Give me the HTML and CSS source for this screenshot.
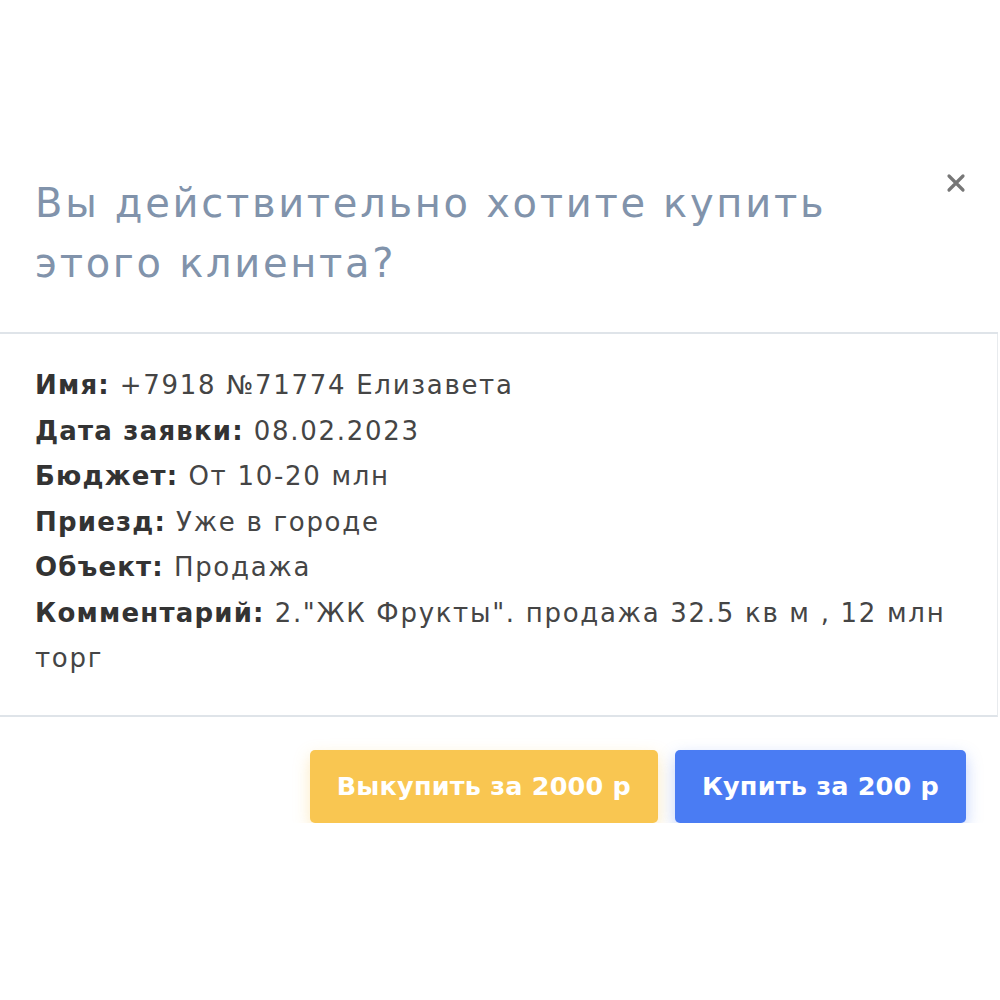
FILE: index.html
```html
<!DOCTYPE html>
<html lang="ru">
<head>
<meta charset="utf-8">
<title>Покупка клиента</title>
<link rel="stylesheet" href="styles.css">
</head>
<body>
<div class="page">
  <div class="modal">
    <div class="modal-header">
      <h2 class="modal-title">Вы действительно хотите купить<br>этого клиента?</h2>
      <button class="close" type="button" aria-label="Закрыть">
        <svg width="20" height="20" viewBox="0 0 20 20"><path d="M3 3 L17 17 M17 3 L3 17" stroke="#777" stroke-width="3.2" stroke-linecap="round"/></svg>
      </button>
    </div>
    <div class="modal-body">
      <p class="row"><span class="label">Имя:</span> +7918 №71774 Елизавета</p>
      <p class="row"><span class="label">Дата заявки:</span> 08.02.2023</p>
      <p class="row"><span class="label">Бюджет:</span> От 10-20 млн</p>
      <p class="row"><span class="label">Приезд:</span> Уже в городе</p>
      <p class="row"><span class="label">Объект:</span> Продажа</p>
      <p class="row"><span class="label">Комментарий:</span> 2."ЖК Фрукты". продажа 32.5 кв м , 12 млн<br>торг</p>
    </div>
    <div class="modal-footer">
      <button class="btn btn-yellow" type="button">Выкупить за 2000 р</button>
      <button class="btn btn-blue" type="button">Купить за 200 р</button>
    </div>
  </div>
</div>
</body>
</html>
```
FILE: styles.css
```css
html, body {
  margin: 0;
  padding: 0;
  background: #ffffff;
}
body {
  font-family: "DejaVu Sans", "Noto Sans", sans-serif;
}
.page {
  padding-top: 143px;
}
.modal {
  width: 998px;
  background: #fff;
}
.modal-header {
  display: flex;
  justify-content: space-between;
  align-items: flex-start;
  padding: 30px 32px 39px 35px;
  border-bottom: 2px solid #dfe4e9;
}
.modal-title {
  margin: 0;
  font-size: 40px;
  font-weight: 400;
  line-height: 60px;
  letter-spacing: 2.7px;
  color: #8193ab;
}
.close {
  border: 0;
  background: none;
  padding: 0;
  margin: 0;
  width: 20px;
  height: 20px;
  cursor: pointer;
}
.close svg {
  display: block;
}
.modal-body {
  padding: 29px 35px 33px 35px;
  border-bottom: 2px solid #dfe4e9;
  border-right: 1px solid #e8ebee;
}
.row {
  margin: 0;
  font-size: 26px;
  line-height: 45.5px;
  color: #454545;
  letter-spacing: 1.7px;
}
.label {
  font-weight: 600;
  color: #333;
  letter-spacing: 1.2px;
}
.modal-footer {
  display: flex;
  justify-content: flex-end;
  gap: 17px;
  padding: 33px 32px 0 0;
}
.btn {
  border: 0;
  border-radius: 5px;
  height: 73px;
  padding: 0 27px;
  font-family: "DejaVu Sans", "Noto Sans", sans-serif;
  font-size: 25.5px;
  font-weight: 600;
  letter-spacing: 0.2px;
  color: #fff;
  cursor: pointer;
}
.btn-yellow {
  background: #f9c651;
  box-shadow: 0 6px 16px rgba(249, 198, 81, 0.35);
}
.btn-blue {
  background: #4a7cf3;
  box-shadow: 0 6px 16px rgba(74, 124, 243, 0.35);
}
```
